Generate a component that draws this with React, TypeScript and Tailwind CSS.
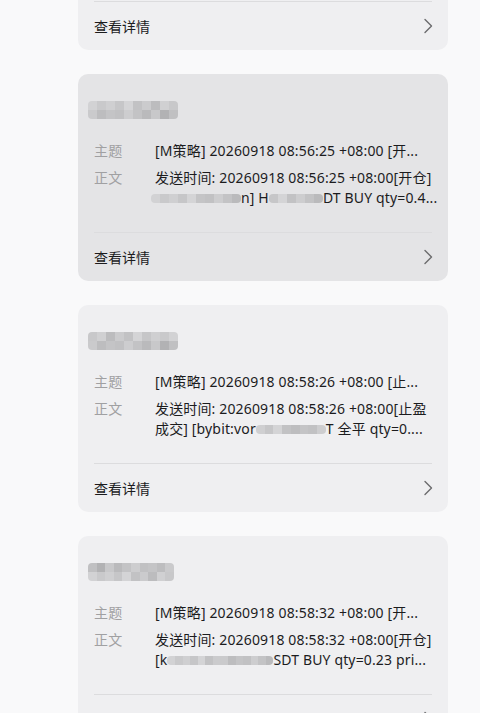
const font = { fontFamily: '"Noto Sans", "Noto Sans CJK SC", sans-serif' };

type Piece = string | { blur: number; cells: string[]; lead?: boolean };

function Mosaic({ width, cells, rows = 1, className = "" }: { width: number; cells: string[]; rows?: number; className?: string }) {
  const cols = Math.ceil(cells.length / rows);
  return (
    <span
      className={`inline-grid align-middle overflow-hidden rounded-sm ${className}`}
      style={{ width, gridTemplateColumns: `repeat(${cols}, 1fr)`, height: rows * 9 }}
    >
      {cells.map((c, i) => (
        <span key={i} style={{ background: c }} />
      ))}
    </span>
  );
}

const greyA = ["#d2d2d4", "#c9c9cb", "#cfcfd1", "#c6c6c8", "#d4d4d6", "#c2c2c4", "#cbcbcd", "#bcbcbe", "#d0d0d2", "#c8c8ca"];
const greyB = ["#cacacc", "#bdbdbf", "#c4c4c6", "#c1c1c3", "#cdcdcf", "#c3c3c5", "#bababc", "#c8c8ca", "#b2b2b4", "#c0c0c2"];

type Item = {
  title: Piece[];
  subject: string;
  line1: string;
  line2: Piece[];
  hover?: boolean;
};

const items: Item[] = [
  {
    title: [{ blur: 90, cells: [...greyA, ...greyB] }],
    subject: "[M策略] 20260918 08:55:12 +08:00 [开...",
    line1: "发送时间: 20260918 08:55:12 +08:00[开仓]",
    line2: ["[b", { blur: 110, cells: [...greyA.slice(0, 6), ...greyB.slice(0, 6)] }, "SDT BUY qty=0.2 pri..."],
  },
  {
    title: [{ blur: 90, cells: [...greyA, ...greyB] }],
    subject: "[M策略] 20260918 08:56:25 +08:00 [开...",
    line1: "发送时间: 20260918 08:56:25 +08:00[开仓]",
    line2: [
      { blur: 90, cells: [...greyA.slice(0, 5), ...greyB.slice(2, 7)], lead: true },
      "n] H",
      { blur: 54, cells: [...greyA.slice(3, 6), ...greyB.slice(4, 7)] },
      "DT BUY qty=0.4...",
    ],
    hover: true,
  },
  {
    title: [{ blur: 90, cells: [...greyA.slice().reverse(), ...greyB] }],
    subject: "[M策略] 20260918 08:58:26 +08:00 [止...",
    line1: "发送时间: 20260918 08:58:26 +08:00[止盈",
    line2: [
      "成交] [bybit:vor",
      { blur: 70, cells: [...greyA.slice(2, 6), ...greyB.slice(1, 5)] },
      "T 全平 qty=0....",
    ],
  },
  {
    title: [{ blur: 86, cells: [...greyB.slice().reverse(), ...greyA] }],
    subject: "[M策略] 20260918 08:58:32 +08:00 [开...",
    line1: "发送时间: 20260918 08:58:32 +08:00[开仓]",
    line2: [
      "[k",
      { blur: 106, cells: [...greyA.slice(0, 7), ...greyB.slice(0, 7)] },
      "SDT BUY qty=0.23 pri...",
    ],
  },
];

function renderPieces(pieces: Piece[], rows = 1) {
  return pieces.map((p, i) =>
    typeof p === "string" ? (
      <span key={i}>{p}</span>
    ) : (
      <Mosaic
        key={i}
        width={p.blur}
        cells={p.cells}
        rows={rows}
        className={`blur-[0.6px] ${p.lead ? "-ml-[4px]" : ""}`}
      />
    ),
  );
}

function Chevron() {
  return (
    <svg width="10" height="16" viewBox="0 0 10 16" fill="none" className="-mr-[1px]">
      <path d="M2 1.5 L8.5 8 L2 14.5" stroke="#6b6b6d" strokeWidth="1.4" strokeLinecap="round" strokeLinejoin="round" />
    </svg>
  );
}

function MailCard({ item }: { item: Item }) {
  return (
    <div className={`rounded-[10px] px-4 ${item.hover ? "bg-[#e4e4e6]" : "bg-[#efeff1]"}`}>
      <div className="box-content flex h-[24px] items-center pt-[24px] -ml-[6px]">
        {renderPieces(item.title, 2)}
      </div>
      <div className="mt-[19px] flex text-[14px] leading-[20px] tracking-[0.15px]">
        <div className="w-[61px] shrink-0 text-[#a0a0a2]">主题</div>
        <div className="whitespace-nowrap text-[#1c1c1e]">{item.subject}</div>
      </div>
      <div className="mt-[7px] flex text-[14px] leading-[20px] tracking-[0.15px]">
        <div className="w-[61px] shrink-0 text-[#a0a0a2]">正文</div>
        <div className="whitespace-nowrap text-[#1c1c1e]">
          <div>{item.line1}</div>
          <div className="flex items-center">{renderPieces(item.line2)}</div>
        </div>
      </div>
      <div className="mt-[24px] h-px bg-[#dcdcde]" />
      <div className="flex h-[48px] items-center justify-between text-[14px] text-[#1c1c1e]">
        <span>查看详情</span>
        <Chevron />
      </div>
    </div>
  );
}

export default function App() {
  return (
    <div className="h-[713px] overflow-hidden bg-[#f9f9fa]" style={font}>
      <div className="-mt-[157px] flex flex-col gap-[24px] pl-[78px] pr-[32px]">
        {items.map((it, i) => (
          <MailCard key={i} item={it} />
        ))}
      </div>
    </div>
  );
}
